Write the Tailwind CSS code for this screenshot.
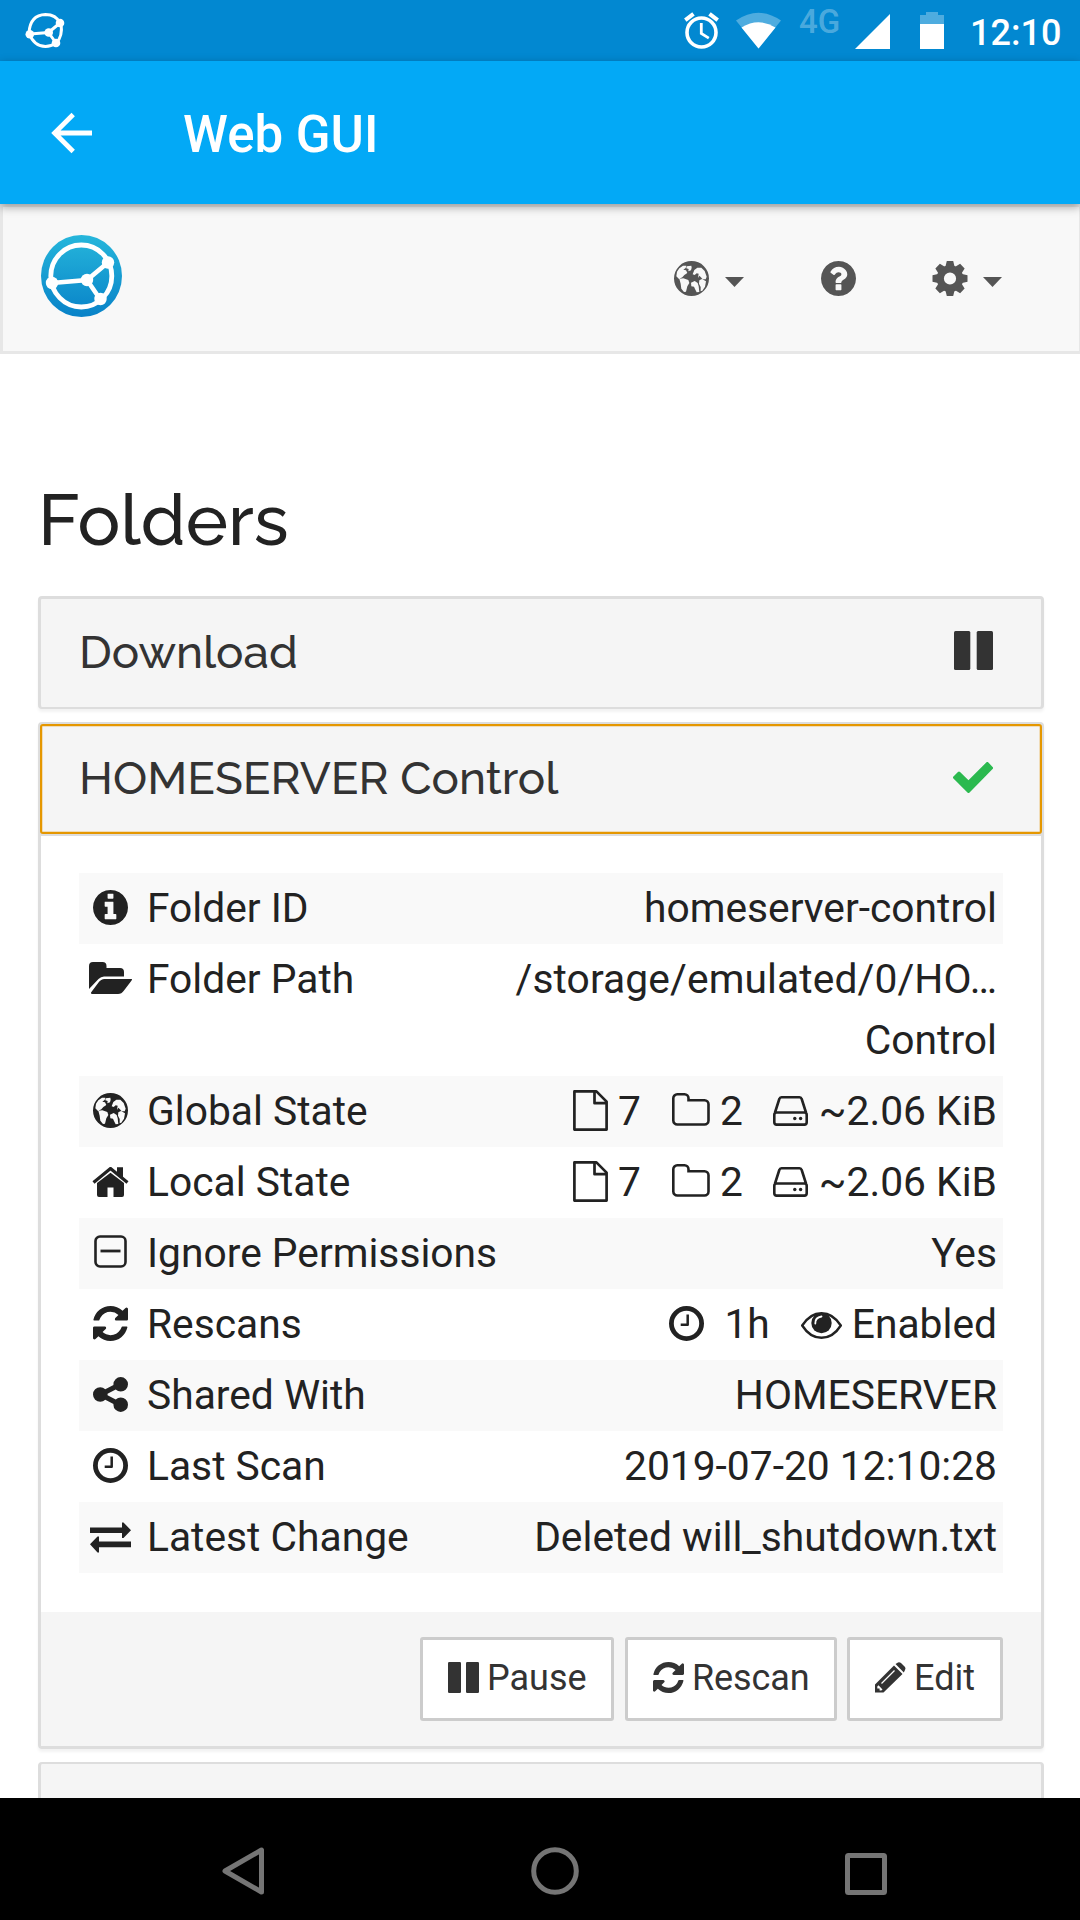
<!DOCTYPE html>
<html lang="en">
<head>
<meta charset="utf-8">
<title>Web GUI</title>
<script src="https://cdn.jsdelivr.net/npm/@tailwindcss/browser@4"></script>
</head>
<body class="w-[1080px] h-[1920px] overflow-hidden bg-white font-['Roboto',sans-serif] text-[#222]">
<svg class="absolute size-0" xmlns="http://www.w3.org/2000/svg">
  <defs>
    <linearGradient id="logo-fill" x1="0" y1="0" x2="0" y2="1"><stop offset="0" stop-color="#26b6db"/><stop offset="1" stop-color="#0882c8"/></linearGradient>
    <symbol id="globe" viewBox="0 0 105 105">
      <path fill="currentColor" fill-rule="evenodd" d="M52.500 0a52.500 52.500 0 1 0 0 105a52.500 52.500 0 1 0 0-105zM7 46L9 32L16 22L27 14L37 14L35 21L28 26L36 28L40 36L31 42L25 49L15 54zM38 16L52 14L53 20L51 28L43 31L44 24L37 22zM56 40L61 27L70 20L82 20L92 30L98 47L95 55L86 55L80 48L76 44L72 51L74 38L68 37L62 42zM16 53L28 52L43 57L46 66L40 76L36 92L30 93L22 83L20 68zM51 65L62 60L71 66L74 76L76 93L68 94L63 84L60 77L52 76zM76 58L84 54L96 61L93 77L85 89L80 91L80 78L75 68z"/>
    </symbol>
    <symbol id="refresh" viewBox="128 128 1536 1536">
      <path fill="currentColor" d="M1639 1056q0 5-1 7-64 268-268 434.500t-478 166.500q-146 0-282.500-55t-243.500-157l-129 129q-19 19-45 19t-45-19-19-45v-448q0-26 19-45t45-19h448q26 0 45 19t19 45-19 45l-137 137q71 66 161 102t187 36q134 0 250-65t186-179q11-17 53-117 8-23 30-23h192q13 0 22.500 9.500t9.500 22.500zm25-800v448q0 26-19 45t-45 19h-448q-26 0-45-19t-19-45 19-45l138-138q-148-137-349-137-134 0-250 65t-186 179q-11 17-53 117-8 23-30 23h-199q-13 0-22.500-9.500t-9.500-22.500v-7q65-268 270-434.500t480-166.500q146 0 284 55.500t245 156.500l130-129q19-19 45-19t45 19 19 45z"/>
    </symbol>
    <symbol id="clock" viewBox="0 0 35 35">
      <circle cx="17.500" cy="17.500" r="15.100" fill="none" stroke="currentColor" stroke-width="4.800"/>
      <path d="M18.700 8.500v10.300h-7" fill="none" stroke="currentColor" stroke-width="2.500" stroke-linejoin="round"/>
    </symbol>
    <symbol id="file" viewBox="0 0 35 41">
      <path d="M1.400 1.400h22l10.200 10.200v28H1.400zM21.500 1.400v11.800h12" fill="none" stroke="currentColor" stroke-width="2.700" stroke-linejoin="round"/>
    </symbol>
    <symbol id="folder" viewBox="0 0 38 33">
      <path d="M1.300 5.300a4 4 0 0 1 4-4h7.200a4 4 0 0 1 4 4v2h16a4 4 0 0 1 4 4v16.200a4 4 0 0 1-4 4H5.300a4 4 0 0 1-4-4z" fill="none" stroke="currentColor" stroke-width="2.600"/>
    </symbol>
    <symbol id="disk" viewBox="0 0 35 30">
      <path d="M2 16.500L6.300 3q.5-1.700 2.200-1.700h18q1.700 0 2.200 1.700L33 16.500M1.300 18.800q0-2.300 2.300-2.300h27.800q2.300 0 2.300 2.300v7.500q0 2.300-2.300 2.300H3.600q-2.300 0-2.300-2.300z" fill="none" stroke="currentColor" stroke-width="2.600" stroke-linejoin="round"/>
      <circle cx="21.800" cy="22.500" r="1.700" fill="currentColor"/><circle cx="27.600" cy="22.500" r="1.700" fill="currentColor"/>
    </symbol>
    <symbol id="caret" viewBox="0 0 19 10"><path d="M0 0h19L9.500 10z" fill="currentColor"/></symbol>
  </defs>
</svg>

<div class="flex h-[1920px] flex-col">
  <!-- Status bar -->
  <div class="flex h-[61px] shrink-0 items-start bg-[#0288d1] text-white">
    <svg class="mt-[12px] ml-[25px] h-[37px] w-[40px]" viewBox="0 0 40 37" fill="none" stroke="#fff">
      <path d="M35 11Q31 2.500 20.500 2.500Q5 3 4 21Q9 34.500 20.500 34.500Q26 34.500 31 31Q38 25 36 11" stroke-width="3"/>
      <path d="M5 22L23.500 20.500L35 11M23.500 20.500L31 31" stroke-width="3"/>
      <g fill="#fff" stroke="none"><circle cx="4.800" cy="22.300" r="4.300"/><circle cx="35" cy="11" r="4.300"/><circle cx="31" cy="31" r="4.300"/><circle cx="23.700" cy="20.500" r="4.300"/></g>
    </svg>
    <svg class="mt-[12px] ml-[618px] h-[38px] w-[37px]" viewBox="0 0 37 38" fill="none" stroke="#fff">
      <circle cx="18.500" cy="20.500" r="14.500" stroke-width="3.600"/><path d="M18.300 11v10.500l7.500 4.600" stroke-width="2.800"/><path d="M2.300 8.200L10.500 1.800M34.700 8.200L26.500 1.800" stroke-width="4"/>
    </svg>
    <svg class="mt-[12px] ml-[15px] h-[37px] w-[47px]" viewBox="0 0 47 37">
      <path d="M23.500 36.500L1 8.500Q23.500-7 46 8.500z" fill="#fff" fill-opacity=".3"/><path d="M23.500 36.500L6.500 15.500Q23.500 5 40.500 15.500z" fill="#fff"/>
    </svg>
    <span class="ml-[17px] mt-[2px] w-[42px] text-[33px] leading-[40px] font-medium whitespace-nowrap text-white/30">4G</span>
    <svg class="mt-[14px] ml-[14px] h-[35px] w-[35px]" viewBox="0 0 35 35"><path d="M0 35L35 0v35z" fill="#fff"/></svg>
    <svg class="mt-[12px] ml-[30px] h-[37px] w-[24px]" viewBox="0 0 24 37"><path d="M0 3h6V0h12v3h6v9H0z" fill="#fff" fill-opacity=".3"/><path d="M0 12h24v25H0z" fill="#fff"/></svg>
    <span class="ml-[26px] mt-[13px] text-[36px] leading-[40px] font-medium whitespace-nowrap">12:10</span>
  </div>

  <!-- App bar -->
  <div class="relative z-20 flex h-[143px] shrink-0 items-center bg-[#03a9f6] text-white shadow-[0_3px_9px_rgba(0,0,0,0.35)]">
    <svg class="ml-[51px] h-[42px] w-[41px]" viewBox="0 0 41 42"><path d="M22.200 2.500L3.600 21l18.600 18.500M3 21h38" fill="none" stroke="#fff" stroke-width="4.800"/></svg>
    <h1 class="ml-[91px] mt-[5px] text-[51px] leading-[60px] font-medium whitespace-nowrap">Web GUI</h1>
  </div>

  <!-- Site navigation -->
  <div class="flex h-[150px] shrink-0 items-start border-[3px] border-r border-[#e7e7e7] bg-[#f8f8f8] text-[#555]">
    <svg class="mt-[28px] ml-[38px] h-[82px] w-[81px]" viewBox="0 0 81 82" fill="none">
      <ellipse cx="40.500" cy="41" rx="40.500" ry="41" fill="url(#logo-fill)"/>
      <ellipse cx="40.300" cy="41" rx="30.500" ry="31" stroke="#fff" stroke-width="4.800"/>
      <path d="M11 48L46 45L67 27.500M46 45L59 64" stroke="#fff" stroke-width="4.600"/>
      <g fill="#fff"><circle cx="11" cy="48" r="6.200"/><circle cx="46" cy="45" r="6.200"/><circle cx="67" cy="27.500" r="6.200"/><circle cx="59.500" cy="64" r="6.200"/></g>
    </svg>
    <svg class="mt-[54px] ml-[552px] size-[35px]"><use href="#globe"/></svg>
    <svg class="mt-[70px] ml-[16px] h-[10px] w-[19px]"><use href="#caret"/></svg>
    <svg class="mt-[54px] ml-[77px] size-[35px]" viewBox="128 128 1536 1536"><path fill="currentColor" d="M1024 1376v-192q0-14-9-23t-23-9h-192q-14 0-23 9t-9 23v192q0 14 9 23t23 9h192q14 0 23-9t9-23zm256-672q0-88-55.500-163t-138.500-116-170-41q-243 0-371 213-15 24 8 42l132 100q7 6 19 6 16 0 25-12 53-68 86-92 34-24 86-24 48 0 85.500 26t37.500 59q0 38-20 61t-68 45q-63 28-115.500 86.500t-52.500 125.500v36q0 14 9 23t23 9h192q14 0 23-9t9-23q0-19 21.500-49.500t54.500-49.500q32-18 49-28.500t46-35 44.500-48 28-60.500 12.500-81zm384 192q0 209-103 385.500t-279.500 279.500-385.500 103-385.500-103-279.500-279.500-103-385.500 103-385.500 279.500-279.500 385.500-103 385.500 103 279.500 279.500 103 385.500z"/></svg>
    <svg class="mt-[54px] ml-[76px] h-[35px] w-[36px]" viewBox="-18 -17.500 36 35">
      <circle r="9.700" fill="none" stroke="currentColor" stroke-width="7.200"/>
      <g fill="currentColor"><path id="tooth" d="M-4.800-11L-3.200-17.500H3.200L4.800-11zM-4.800 11L-3.200 17.500H3.200L4.800 11z"/><use href="#tooth" transform="rotate(45)"/><use href="#tooth" transform="rotate(90)"/><use href="#tooth" transform="rotate(135)"/></g>
    </svg>
    <svg class="mt-[70px] ml-[15px] h-[10px] w-[19px]"><use href="#caret"/></svg>
  </div>

  <!-- Page content -->
  <div class="flex h-[1444px] shrink-0 flex-col overflow-hidden pr-[36px] pl-[38px]">
    <h2 class="mt-[126px] h-[116px] shrink-0 font-['Raleway','Lato',sans-serif] text-[71.500px] leading-[80px] font-medium whitespace-nowrap">Folders</h2>
    <div class="flex flex-col gap-[13px]">
      <div class="flex h-[113px] items-center justify-between rounded-[4px] border-[3px] border-b-2 border-[#ddd] bg-[#f5f5f5] pr-[48px] pl-[38px] text-[#333] shadow-[0_3px_3px_rgba(0,0,0,0.05)]">
        <h3 class="-mt-[2px] font-['Raleway','Lato',sans-serif] text-[45.800px] leading-[54px] font-medium whitespace-nowrap">Download</h3>
        <svg class="-mt-[5px] h-[39px] w-[39px]" viewBox="0 0 39 39" fill="currentColor"><rect width="16.300" height="39" rx="1.500"/><rect x="22.700" width="16.300" height="39" rx="1.500"/></svg>
      </div>

      <div class="flex flex-col rounded-[4px] border-[3px] border-[#ddd] shadow-[0_3px_3px_rgba(0,0,0,0.05)]">
        <div class="relative z-10 flex h-[108px] items-center justify-between rounded-[2px] bg-[#f5f5f5] pr-[48px] pl-[38px] text-[#333] shadow-[inset_0_0_0_2px_#f0dcb8] outline-2 -outline-offset-1 outline-[#e59700]">
          <h3 class="-mt-[2px] font-['Raleway','Lato',sans-serif] text-[45.800px] leading-[54px] font-medium whitespace-nowrap">HOMESERVER Control</h3>
          <svg class="-mt-[3px] h-[31px] w-[40px]" viewBox="0 0 40 31"><path d="M1.500 15.500L6 11L15.500 20.300L34.300 1.500L38.500 6L15.500 29.500z" fill="#2bb94f" stroke="#2bb94f" stroke-width="3" stroke-linejoin="round"/></svg>
        </div>
        <div class="border-t-[3px] border-[#ddd] px-[38px] pt-[37px] pb-[39px] text-[40.750px] leading-[63px] whitespace-nowrap">
          <div class="flex h-[71px] bg-[#f9f9f9] pt-[4px] pr-[6px]">
            <div class="flex h-[61px] w-[62px] items-center justify-center"><svg class="size-[35px]" viewBox="128 128 1536 1536"><path fill="currentColor" d="M1152 1376v-160q0-14-9-23t-23-9h-96v-512q0-14-9-23t-23-9h-320q-14 0-23 9t-9 23v160q0 14 9 23t23 9h96v320h-96q-14 0-23 9t-9 23v160q0 14 9 23t23 9h448q14 0 23-9t9-23zm-128-896v-160q0-14-9-23t-23-9h-192q-14 0-23 9t-9 23v160q0 14 9 23t23 9h192q14 0 23-9t9-23zm640 416q0 209-103 385.500t-279.500 279.500-385.500 103-385.500-103-279.500-279.500-103-385.500 103-385.500 279.500-279.500 385.500-103 385.500 103 279.500 279.500 103 385.500z"/></svg></div>
            <span class="ml-[6px] grow">Folder ID</span><span>homeserver-control</span>
          </div>
          <div class="flex h-[132px] pt-[4px] pr-[6px]">
            <div class="flex h-[61px] w-[62px] items-center justify-center"><svg class="-mt-[2px] h-[32px] w-[43px]" viewBox="0 0 43 32" fill="currentColor"><path d="M0 27V4q0-4 4-4h9.500q4 0 4 4v2H31q4 0 4 4v4.500H15q-3 0-5.500 2.500z"/><path d="M15.500 17H43q0 1-.6 1.800L35 28.500Q32.500 32 29 32H3.500Q1.500 32 2 30.500L9.500 20.500Q12 17 15.500 17z"/></svg></div>
            <span class="ml-[6px] grow">Folder Path</span><span class="mt-px text-right leading-[61px]"><span class="tracking-[0.1px]">/storage/emulated/0/HO…</span><br>Control</span>
          </div>
          <div class="flex h-[71px] bg-[#f9f9f9] pt-[4px] pr-[6px]">
            <div class="flex h-[61px] w-[62px] items-center justify-center"><svg class="size-[35px]"><use href="#globe"/></svg></div>
            <span class="ml-[6px] grow">Global State</span>
            <svg class="mt-[10px] h-[41px] w-[35px]"><use href="#file"/></svg><span class="ml-[10px]">7</span>
            <svg class="mt-[13px] ml-[31px] h-[33px] w-[38px]"><use href="#folder"/></svg><span class="ml-[10px]">2</span>
            <svg class="mt-[16px] ml-[30px] h-[30px] w-[35px]"><use href="#disk"/></svg><span class="ml-[11px]">~2.06 KiB</span>
          </div>
          <div class="flex h-[71px] pt-[4px] pr-[6px]">
            <div class="flex h-[61px] w-[62px] items-center justify-center"><svg class="mt-[1px] h-[30px] w-[37px]" viewBox="0 0 37 30"><path d="M1.500 15.500L18.500 1.500L35.500 15.500" fill="none" stroke="currentColor" stroke-width="3.200"/><path d="M25 .3h6V12l-6-5zM5 16L18.500 5.700L32 16v12q0 2-2 2H21.500V20.500h-6V30H7q-2 0-2-2z" fill="currentColor"/></svg></div>
            <span class="ml-[6px] grow">Local State</span>
            <svg class="mt-[10px] h-[41px] w-[35px]"><use href="#file"/></svg><span class="ml-[10px]">7</span>
            <svg class="mt-[13px] ml-[31px] h-[33px] w-[38px]"><use href="#folder"/></svg><span class="ml-[10px]">2</span>
            <svg class="mt-[16px] ml-[30px] h-[30px] w-[35px]"><use href="#disk"/></svg><span class="ml-[11px]">~2.06 KiB</span>
          </div>
          <div class="flex h-[71px] bg-[#f9f9f9] pt-[4px] pr-[6px]">
            <div class="flex h-[61px] w-[62px] items-center justify-center"><svg class="-mt-[3px] size-[33px]" viewBox="0 0 33 33"><rect x="1.500" y="1.500" width="30" height="30" rx="4.500" fill="none" stroke="currentColor" stroke-width="2.600"/><path d="M6.500 16h20" stroke="currentColor" stroke-width="2.800"/></svg></div>
            <span class="ml-[6px] grow">Ignore Permissions</span><span>Yes</span>
          </div>
          <div class="flex h-[71px] pt-[4px] pr-[6px]">
            <div class="flex h-[61px] w-[62px] items-center justify-center"><svg class="size-[35px]"><use href="#refresh"/></svg></div>
            <span class="ml-[6px] grow">Rescans</span>
            <svg class="mt-[13px] size-[35px]"><use href="#clock"/></svg><span class="ml-[20px]">1h</span>
            <svg class="mt-[19px] ml-[31px] h-[27px] w-[41px]" viewBox="0 0 41 27"><path d="M1.200 13.500Q9 1.200 20.500 1.200T39.800 13.500Q32 25.800 20.500 25.800T1.200 13.500z" fill="none" stroke="currentColor" stroke-width="2.400" stroke-linejoin="round"/><circle cx="20.500" cy="11" r="10.200" fill="currentColor"/><path d="M14.300 11.500Q14 5.500 20.500 4.500" fill="none" stroke="#fff" stroke-width="1.800" stroke-linecap="round"/></svg><span class="ml-[10px]">Enabled</span>
          </div>
          <div class="flex h-[71px] bg-[#f9f9f9] pt-[4px] pr-[6px]">
            <div class="flex h-[61px] w-[62px] items-center justify-center"><svg class="size-[35px]" viewBox="128 128 1536 1536"><path fill="currentColor" d="M1344 1024q133 0 226.500 93.500t93.500 226.500-93.500 226.500-226.500 93.500-226.500-93.500-93.500-226.500q0-12 2-34l-360-180q-92 86-218 86-133 0-226.500-93.500t-93.500-226.500 93.500-226.500 226.500-93.500q126 0 218 86l360-180q-2-22-2-34 0-133 93.500-226.500t226.500-93.500 226.500 93.500 93.500 226.500-93.500 226.500-226.500 93.500q-126 0-218-86l-360 180q2 22 2 34t-2 34l360 180q92-86 218-86z"/></svg></div>
            <span class="ml-[6px] grow">Shared With</span><span>HOMESERVER</span>
          </div>
          <div class="flex h-[71px] pt-[4px] pr-[6px]">
            <div class="flex h-[61px] w-[62px] items-center justify-center"><svg class="size-[35px]"><use href="#clock"/></svg></div>
            <span class="ml-[6px] grow">Last Scan</span><span>2019-07-20 12:10:28</span>
          </div>
          <div class="flex h-[71px] bg-[#f9f9f9] pt-[4px] pr-[6px]">
            <div class="flex h-[61px] w-[62px] items-center justify-center"><svg class="mt-[1px] h-[31px] w-[41px]" viewBox="0 0 41 31" fill="currentColor"><path d="M0 5.500h32V.5h1.500L41 8.200L33.500 16H32v-5H0zM41 19.500H9v-5H7.500L0 22.300L7.500 30.500H9V25.200H41z"/></svg></div>
            <span class="ml-[6px] grow">Latest Change</span><span>Deleted will_shutdown.txt</span>
          </div>
        </div>
        <div class="flex h-[134px] items-start justify-end gap-[10px] bg-[#f5f5f5] pt-[25px] pr-[38px] text-[36px] leading-[56px] whitespace-nowrap text-[#333]">
          <button class="mr-px flex h-[84px] w-[194px] items-start rounded-[3px] border-[3px] border-[#ccc] bg-white pt-[10px] pl-[25px]"><svg class="mt-[12px] h-[31px] w-[31px]" viewBox="0 0 31 31" fill="currentColor"><rect width="13" height="31" rx="1.200"/><rect x="18" width="13" height="31" rx="1.200"/></svg><span class="ml-[8px]">Pause</span></button>
          <button class="flex h-[84px] w-[212px] items-start rounded-[3px] border-[3px] border-[#ccc] bg-white pt-[10px] pl-[25px]"><svg class="mt-[12px] size-[31px]"><use href="#refresh"/></svg><span class="ml-[8px] tracking-[-0.1px]">Rescan</span></button>
          <button class="flex h-[84px] w-[156px] items-start rounded-[3px] border-[3px] border-[#ccc] bg-white pt-[10px] pl-[25px]"><svg class="mt-[12px] size-[31px]" viewBox="0 0 31 31"><path fill="currentColor" fill-rule="evenodd" d="M0 30.500V22.500L19 3.500L27.500 12L8.500 30.500zM2.300 24.500L3.500 23.300L7.500 27.500L6.300 28.500H4.600V26.400H2.300z"/><path d="M20.500 2L23 .5Q24.500 0 26 1L30 5Q31 6.500 30 8L28.800 10.500z" fill="currentColor"/><path d="M6.500 21.500L19.500 8.500" stroke="#fff" stroke-width="1.300"/></svg><span class="ml-[8px]">Edit</span></button>
        </div>
      </div>

      <div class="h-[113px] shrink-0 rounded-[4px] border-[3px] border-t-2 border-[#ddd] bg-[#f5f5f5]"></div>
    </div>
  </div>

  <!-- System navigation -->
  <div class="flex h-[122px] shrink-0 items-start bg-black">
    <svg class="mt-[48px] ml-[221px] h-[50px] w-[44px]" viewBox="0 0 44 50"><path d="M4 25L40.500 4V46z" fill="none" stroke="#757575" stroke-width="5" stroke-linejoin="round"/></svg>
    <svg class="mt-[49px] ml-[266px] size-[48px]" viewBox="0 0 48 48"><circle cx="24" cy="24" r="21.300" fill="none" stroke="#757575" stroke-width="5"/></svg>
    <svg class="mt-[55px] ml-[266px] size-[42px]" viewBox="0 0 42 42"><rect x="2.500" y="2.500" width="37" height="37" rx="1" fill="none" stroke="#757575" stroke-width="5"/></svg>
  </div>
</div>
</body>
</html>
